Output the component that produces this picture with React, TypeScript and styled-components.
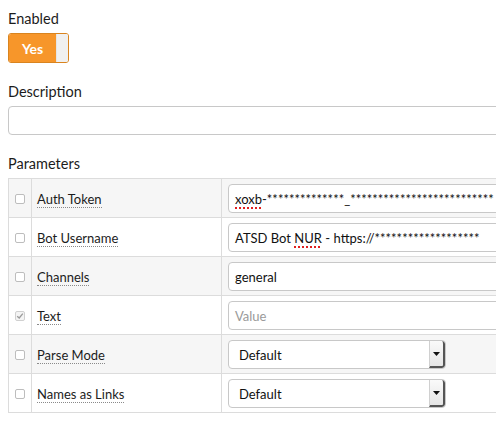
import styled, { createGlobalStyle } from 'styled-components';

const GlobalStyle = createGlobalStyle`
  html, body {
    margin: 0;
    padding: 0;
    background: #fff;
    overflow: hidden;
  }
  body {
    font-family: Lato, 'Liberation Sans', sans-serif;
    color: #1c1c1c;
  }
`;

const Page = styled.div`
  width: 540px;
  padding: 8px;
  display: flex;
  flex-direction: column;
  gap: 18px;
`;

const Field = styled.div`
  display: flex;
  flex-direction: column;
  gap: 5px;
`;

const Label = styled.div`
  font-size: 14.5px;
  line-height: 19px;
  padding-top: 1px;
  color: #1c1c1c;
`;

const Toggle = styled.div`
  display: flex;
  width: 61px;
  height: 30px;
  box-sizing: border-box;
  border: 1px solid #d9841f;
  border-radius: 3px;
  overflow: hidden;
`;

const ToggleOn = styled.div`
  flex: 0 0 47px;
  background: #f7962a;
  color: #fff;
  font-weight: 700;
  font-size: 14px;
  display: flex;
  align-items: center;
  justify-content: center;
`;

const ToggleKnob = styled.div`
  flex: 1;
  background: #f0f0f0;
  border-left: 1px solid #e5e5e5;
`;

const TextBox = styled.div`
  height: 29px;
  box-sizing: border-box;
  border: 1px solid #c8c8c8;
  border-radius: 4px;
  background: #fff;
`;

const Table = styled.div`
  display: flex;
  flex-direction: column;
  border-top: 1px solid #dcdcdc;
  border-left: 1px solid #dcdcdc;
`;

const Row = styled.div<{ $striped: boolean }>`
  display: grid;
  grid-template-columns: 23px 190px 1fr;
  height: 39px;
  box-sizing: border-box;
  border-bottom: 1px solid #dcdcdc;
  background: ${(p) => (p.$striped ? '#f6f6f6' : '#fff')};
`;

const CheckCell = styled.div`
  display: flex;
  align-items: center;
  justify-content: center;
  padding-top: 2px;
  border-right: 1px solid #dcdcdc;
`;

const CheckBox = styled.div<{ $checked: boolean }>`
  width: 10px;
  height: 10px;
  box-sizing: border-box;
  border: 1px solid ${(p) => (p.$checked ? '#d0d0d0' : '#bdbdbd')};
  border-radius: 2px;
  background: ${(p) => (p.$checked ? '#f4f4f4' : '#fff')};
  display: flex;
  align-items: center;
  justify-content: center;
`;

const NameCell = styled.div`
  display: flex;
  align-items: center;
  padding: 3px 0 0 5px;
  border-right: 1px solid #dcdcdc;
`;

const ParamName = styled.span`
  font-size: 13px;
  line-height: 15px;
  color: #1c1c1c;
  border-bottom: 1px dotted #8a8a8a;
`;

const ValueCell = styled.div`
  display: flex;
  align-items: center;
  padding: 1px 0 0 6px;
`;

const ValueBox = styled.div`
  flex: 1;
  height: 29px;
  box-sizing: border-box;
  border: 1px solid #c8c8c8;
  border-radius: 4px;
  background: #fff;
  display: flex;
  align-items: center;
  padding: 1px 0 0 6px;
  font-size: 13px;
  color: #111;
  white-space: nowrap;
`;

const Placeholder = styled.span`
  color: #9a9a9a;
`;

const Squiggle = styled.span`
  text-decoration: underline dotted #e02020;
  text-decoration-thickness: 2px;
  text-underline-offset: 3px;
`;

const SelectBox = styled.div`
  width: 218px;
  height: 29px;
  box-sizing: border-box;
  border: 1px solid #c8c8c8;
  border-radius: 4px;
  background: #fff;
  display: flex;
  overflow: hidden;
`;

const SelectText = styled.div`
  flex: 1;
  display: flex;
  align-items: center;
  padding: 1px 0 0 10px;
  font-size: 13px;
  color: #111;
`;

const SelectButton = styled.div`
  width: 13px;
  display: flex;
  align-items: center;
  justify-content: center;
  background: linear-gradient(#fafafa, #e6e6e6);
  border-left: 1px solid #d0d0d0;
  border-right: 2px solid #555;
  border-bottom: 2px solid #555;
  border-radius: 0 3px 3px 0;
`;

type Param = {
  name: string;
  kind: 'text' | 'select';
  value?: React.ReactNode;
  placeholder?: string;
  checked?: boolean;
};

const PARAMS: Param[] = [
  {
    name: 'Auth Token',
    kind: 'text',
    value: (
      <span>
        <Squiggle>xoxb</Squiggle>-**************_**************************
      </span>
    ),
  },
  {
    name: 'Bot Username',
    kind: 'text',
    value: (
      <span>
        ATSD Bot <Squiggle>NUR</Squiggle> - https://*******************
      </span>
    ),
  },
  { name: 'Channels', kind: 'text', value: 'general' },
  { name: 'Text', kind: 'text', placeholder: 'Value', checked: true },
  { name: 'Parse Mode', kind: 'select', value: 'Default' },
  { name: 'Names as Links', kind: 'select', value: 'Default' },
];

export default function App() {
  return (
    <Page>
      <GlobalStyle />
      <Field>
        <Label>Enabled</Label>
        <Toggle>
          <ToggleOn>Yes</ToggleOn>
          <ToggleKnob />
        </Toggle>
      </Field>
      <Field>
        <Label>Description</Label>
        <TextBox />
      </Field>
      <Field>
        <Label>Parameters</Label>
        <Table>
          {PARAMS.map((p, i) => (
            <Row key={p.name} $striped={i % 2 === 0}>
              <CheckCell>
                <CheckBox $checked={!!p.checked}>
                  {p.checked && (
                    <svg width="8" height="8" viewBox="0 0 8 8">
                      <path d="M1.2 4.2 L3.2 6 L6.8 1.6" fill="none" stroke="#9a9a9a" strokeWidth="1.3" />
                    </svg>
                  )}
                </CheckBox>
              </CheckCell>
              <NameCell>
                <ParamName>{p.name}</ParamName>
              </NameCell>
              <ValueCell>
                {p.kind === 'text' ? (
                  <ValueBox>
                    {p.value ? p.value : <Placeholder>{p.placeholder}</Placeholder>}
                  </ValueBox>
                ) : (
                  <SelectBox>
                    <SelectText>{p.value}</SelectText>
                    <SelectButton>
                      <svg width="7" height="4" viewBox="0 0 7 4">
                        <path d="M0 0 H7 L3.5 4 Z" fill="#111" />
                      </svg>
                    </SelectButton>
                  </SelectBox>
                )}
              </ValueCell>
            </Row>
          ))}
        </Table>
      </Field>
    </Page>
  );
}
